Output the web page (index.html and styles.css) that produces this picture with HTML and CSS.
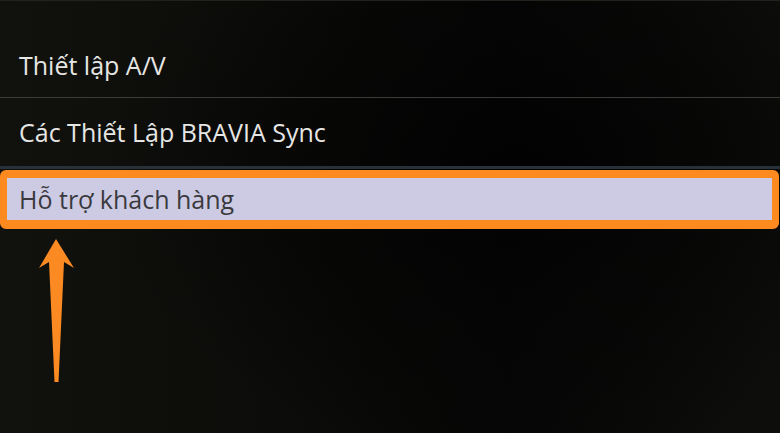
FILE: index.html
```html
<!DOCTYPE html>
<html lang="vi">
<head>
<meta charset="utf-8">
<title>Cài đặt</title>
<link rel="stylesheet" href="styles.css">
</head>
<body>
<div class="screen">
  <div class="top-line"></div>
  <ul class="menu">
    <li class="item item-first"><span class="label">Thiết lập A/V</span></li>
    <li class="item item-second"><span class="label">Các Thiết Lập BRAVIA Sync</span></li>
    <li class="item item-active"><span class="label">Hỗ trợ khách hàng</span></li>
  </ul>
  <svg class="arrow" width="80" height="160" viewBox="0 0 80 160" aria-hidden="true">
    <path d="M56 4 L74 33 L64 27 L58.5 147 L54.5 147 L49 27 L39 33 Z" fill="#fb8a22"/>
  </svg>
</div>
</body>
</html>
```
FILE: styles.css
```css
html, body {
  margin: 0;
  padding: 0;
  background: #050504;
}
.screen {
  position: relative;
  width: 780px;
  height: 433px;
  overflow: hidden;
  background:
    radial-gradient(ellipse 420px 300px at 520px 170px, #020202 0%, rgba(3,3,3,0.6) 45%, rgba(0,0,0,0) 100%),
    linear-gradient(90deg, #11120e 0%, #0b0b09 40%, #060606 65%, #0e0f0c 100%);
  font-family: "Open Sans", "Noto Sans", sans-serif;
}
.top-line {
  height: 1px;
  background: #22221c;
}
.menu {
  list-style: none;
  margin: 0;
  padding: 0;
}
.item {
  display: flex;
  align-items: center;
  padding-left: 19px;
  font-size: 25px;
  line-height: 30px;
  color: #e6e6e4;
}
.item-first {
  height: 97px;
  box-sizing: border-box;
  padding-top: 31px;
  border-bottom: 1px solid #3b3b38;
}
.item-second {
  height: 71px;
  box-sizing: border-box;
  border-bottom: 3px solid #28303a;
}
.item-active {
  margin-top: 1px;
  width: 779px;
  height: 59px;
  box-sizing: border-box;
  border: 8px solid #fd8a1f;
  border-left-width: 7px;
  border-right-width: 7px;
  border-bottom-width: 9px;
  border-radius: 6px;
  background: #cdcbe4;
  color: #3a3a3e;
  padding-left: 12px;
}
.arrow {
  position: absolute;
  left: 0;
  top: 235px;
}
```
